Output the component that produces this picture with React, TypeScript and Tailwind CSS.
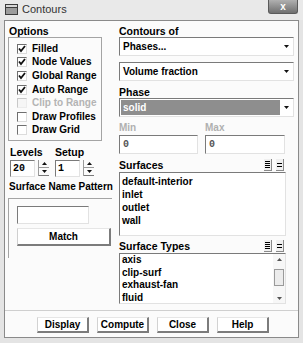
import React from "react";

type CheckProps = { label: string; checked?: boolean; disabled?: boolean };

function Check({ label, checked, disabled }: CheckProps) {
  return (
    <div className="h-[13.6px] flex items-center">
      <span
        className={`w-[10px] h-[10px] ml-[8px] mr-[5px] flex items-center justify-center border-t border-l border-b border-r ${
          disabled
            ? "border-t-[#c8c8c8] border-l-[#c8c8c8] border-b-[#ececec] border-r-[#ececec] bg-[#f6f6f6]"
            : "border-t-[#6f6f6f] border-l-[#6f6f6f] border-b-[#dcdcdc] border-r-[#dcdcdc] bg-white"
        }`}
      >
        {checked && (
          <svg width="8" height="8" viewBox="0 0 8 8">
            <polyline points="1,3.5 3,6 7,1" fill="none" stroke="#111" strokeWidth="1.8" />
          </svg>
        )}
      </span>
      <span className={disabled ? "text-[#b4b4b4]" : "text-black"}>{label}</span>
    </div>
  );
}

function Arrow() {
  return (
    <svg width="5" height="3" viewBox="0 0 5 3">
      <polygon points="0,0 5,0 2.5,3" fill="#111" />
    </svg>
  );
}

function Dropdown({ text, selected }: { text: string; selected?: boolean }) {
  return (
    <div className="h-[19px] w-[175px] flex border-t border-l border-b border-r border-t-[#7a7a7a] border-l-[#7a7a7a] border-b-[#e2e2e2] border-r-[#e2e2e2] bg-white">
      <div
        className={`flex-1 flex items-center pl-[2px] my-[1px] ml-[1px] ${
          selected ? "bg-[#8e8e8e] text-white" : "text-black"
        }`}
      >
        {text}
      </div>
      <div className="w-[13px] flex items-center justify-center">
        <Arrow />
      </div>
    </div>
  );
}

function Spin() {
  return (
    <div className="w-[11px] h-[16px] flex flex-col ml-[3px] border-l border-[#9a9a9a]">
      <div className="flex-1 flex items-center justify-center border-b border-[#9a9a9a]">
        <svg width="5" height="3" viewBox="0 0 5 3">
          <polygon points="0,3 5,3 2.5,0" fill="#111" />
        </svg>
      </div>
      <div className="flex-1 flex items-center justify-center border-b border-[#7a7a7a]">
        <Arrow />
      </div>
    </div>
  );
}

function ListIcons() {
  return (
    <div className="flex gap-[4px] mr-[10px]">
      <div className="w-[8px] h-[12px] bg-[#f0f0f0] border-r border-b border-[#8a8a8a] flex flex-col justify-center items-center gap-[1px]">
        <span className="w-[5px] h-[1px] bg-black" />
        <span className="w-[5px] h-[1px] bg-black" />
        <span className="w-[5px] h-[1px] bg-black" />
        <span className="w-[5px] h-[1px] bg-black" />
      </div>
      <div className="w-[8px] h-[12px] bg-[#f0f0f0] border-r border-b border-[#8a8a8a] flex flex-col justify-center items-center gap-[2px]">
        <span className="w-[5px] h-[1px] bg-black" />
        <span className="w-[5px] h-[1px] bg-black" />
      </div>
    </div>
  );
}

function Btn({ label }: { label: string }) {
  return (
    <div className="w-[52px] h-[16px] flex items-center justify-center bg-white border-t border-l border-b-2 border-r-2 border-t-[#e6e6e6] border-l-[#d2d2d2] border-b-[#7c7c7c] border-r-[#7c7c7c]">
      {label}
    </div>
  );
}

export default function App() {
  const sunken =
    "border-t border-l border-b border-r border-t-[#7a7a7a] border-l-[#7a7a7a] border-b-[#e2e2e2] border-r-[#e2e2e2] bg-white";

  return (
    <div className="w-[303px] h-[343px] bg-[#e4e4e4] flex flex-col font-['Liberation_Sans',Arial,sans-serif] text-[10px] font-bold leading-[12px] text-black select-none">
      {/* title bar */}
      <div className="h-[20px] flex items-start bg-[#e9e9e9]">
        <div className="mt-[4px] ml-[5px] w-[13px] h-[11px] bg-[#3c3c3c] flex flex-col p-[1px] gap-[1px]">
          <span className="h-[2px] bg-[#d8d8d8]" />
          <span className="flex-1 bg-[#9c9c9c]" />
        </div>
        <div className="mt-[3px] ml-[4px] font-normal text-[11px] text-[#333]">Contours</div>
        <div className="ml-auto mr-[5px] w-[30px] h-[14px] rounded-b-[3px] bg-gradient-to-b from-[#b0b0b0] to-[#707070] border border-[#5a5a5a] border-t-0 flex items-center justify-center text-white text-[10px] leading-none">
          x
        </div>
      </div>

      {/* panel */}
      <div className="mx-[4px] mb-[5px] h-[318px] bg-[#fbfbfb] border border-[#8a8a8a] flex flex-col">
        <div className="flex h-[289px]">
          {/* left column */}
          <div className="w-[107px] ml-[3px] flex flex-col">
            <div className="mt-[4px] h-[12px] ml-[1px] text-[10.5px]">Options</div>
            <div className="w-[94px] h-[104px] border border-[#a4a4a4] pt-[4px]">
              <Check label="Filled" checked />
              <Check label="Node Values" checked />
              <Check label="Global Range" checked />
              <Check label="Auto Range" checked />
              <Check label="Clip to Range" disabled />
              <Check label="Draw Profiles" />
              <Check label="Draw Grid" />
            </div>

            <div className="flex mt-[5px] ml-[2px]">
              <div className="flex flex-col">
                <div className="h-[12px] text-[10.5px]">Levels</div>
                <div className="flex mt-[2px]">
                  <div className={`w-[25px] h-[17px] ${sunken} pl-[2px] flex items-center font-['Liberation_Mono',monospace] text-[10px]`}>20</div>
                  <Spin />
                </div>
              </div>
              <div className="flex flex-col ml-[6px]">
                <div className="h-[12px] text-[10.5px]">Setup</div>
                <div className="flex mt-[2px]">
                  <div className={`w-[25px] h-[17px] ${sunken} pl-[2px] flex items-center font-['Liberation_Mono',monospace] text-[10px]`}>1</div>
                  <Spin />
                </div>
              </div>
            </div>

            <div className="mt-[4px] h-[12px] ml-[1px] whitespace-nowrap">Surface Name Pattern</div>
            <div className="mt-[5px] w-[104px] h-[60px] border-t border-l border-[#a4a4a4] pt-[7px] pl-[8px]">
              <div className={`w-[72px] h-[18px] ${sunken}`} />
              <div className="mt-[4px] w-[94px] h-[18px] flex items-center justify-center bg-white border-t border-l border-b-2 border-r-2 border-t-[#e6e6e6] border-l-[#cfcfcf] border-b-[#7c7c7c] border-r-[#7c7c7c]">
                Match
              </div>
            </div>
          </div>

          {/* right column */}
          <div className="w-[175px] ml-[4px] flex flex-col">
            <div className="mt-[4px] h-[12px] text-[10.5px]">Contours of</div>
            <Dropdown text="Phases..." />
            <div className="mt-[6px]">
              <Dropdown text="Volume fraction" />
            </div>
            <div className="mt-[4px] h-[13px] flex items-center text-[10.5px]">Phase</div>
            <Dropdown text="solid" selected />
            <div className="flex mt-[5px]">
              <div className="flex flex-col w-[79px]">
                <div className="h-[13px] text-[#b0b0b0]">Min</div>
                <div className={`h-[19px] ${sunken} pl-[3px] flex items-center font-['Liberation_Mono',monospace] text-[10px] text-[#555]`}>0</div>
              </div>
              <div className="flex flex-col w-[80px] ml-[7px]">
                <div className="h-[13px] text-[#b0b0b0]">Max</div>
                <div className={`h-[19px] ${sunken} pl-[3px] flex items-center font-['Liberation_Mono',monospace] text-[10px] text-[#555]`}>0</div>
              </div>
            </div>

            <div className="mt-[4px] h-[14px] flex items-center justify-between text-[10.5px]">
              <span>Surfaces</span>
              <ListIcons />
            </div>
            <div className={`w-[167px] h-[64px] ${sunken} pt-[2px] pl-[2px] leading-[13px]`}>
              <div>default-interior</div>
              <div>inlet</div>
              <div>outlet</div>
              <div>wall</div>
            </div>

            <div className="mt-[3px] h-[14px] flex items-center justify-between text-[10.5px]">
              <span>Surface Types</span>
              <ListIcons />
            </div>
            <div className={`w-[167px] h-[51px] ${sunken} flex overflow-hidden`}>
              <div className="flex-1 pl-[2px] leading-[12.6px]">
                <div>axis</div>
                <div>clip-surf</div>
                <div>exhaust-fan</div>
                <div>fluid</div>
              </div>
              <div className="w-[12px] flex flex-col items-center bg-[#f7f7f7]">
                <div className="h-[10px] flex items-center">
                  <svg width="5" height="3" viewBox="0 0 5 3">
                    <polygon points="0,3 5,3 2.5,0" fill="#555" />
                  </svg>
                </div>
                <div className="mt-[5px] w-[10px] h-[17px] bg-[#ececec] border border-[#9a9a9a]" />
                <div className="mt-auto h-[10px] flex items-center">
                  <svg width="5" height="3" viewBox="0 0 5 3">
                    <polygon points="0,0 5,0 2.5,3" fill="#555" />
                  </svg>
                </div>
              </div>
            </div>
          </div>
        </div>

        {/* buttons */}
        <div className="flex-1 border-t border-[#cfcfcf] flex items-start pt-[6px] pl-[32px] gap-[8px]">
          <Btn label="Display" />
          <Btn label="Compute" />
          <Btn label="Close" />
          <Btn label="Help" />
        </div>
      </div>
    </div>
  );
}
